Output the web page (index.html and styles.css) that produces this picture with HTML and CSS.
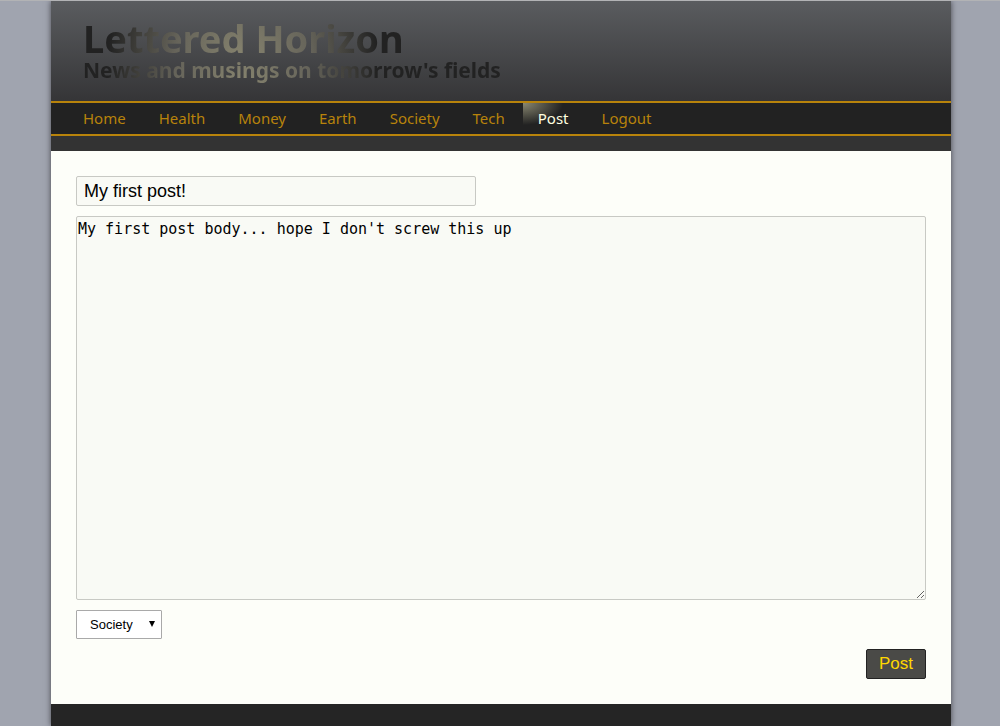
FILE: index.html
```html
<!DOCTYPE html>
<html lang="en">
<head>
<meta charset="utf-8">
<title>Lettered Horizon</title>
<link rel="stylesheet" href="styles.css">
</head>
<body>
<div class="page">
  <header class="masthead">
    <div class="banner">
      <h1 class="title">Lettered Horizon</h1>
      <p class="tagline">News and musings on tomorrow's fields</p>
    </div>
    <nav class="nav">
      <a href="#home">Home</a>
      <a href="#health">Health</a>
      <a href="#money">Money</a>
      <a href="#earth">Earth</a>
      <a href="#society">Society</a>
      <a href="#tech">Tech</a>
      <a class="current" href="#post" aria-current="page">Post</a>
      <a href="#logout">Logout</a>
    </nav>
  </header>
  <main>
    <form class="editor">
      <input class="post-title" type="text" aria-label="Post title" value="My first post!">
      <textarea class="post-body" aria-label="Post body" spellcheck="false">My first post body... hope I don't screw this up</textarea>
      <select class="category" aria-label="Category">
        <option>Home</option>
        <option>Health</option>
        <option>Money</option>
        <option>Earth</option>
        <option selected>Society</option>
        <option>Tech</option>
      </select>
      <button class="submit" type="button">Post</button>
    </form>
  </main>
  <footer class="footer"></footer>
</div>
</body>
</html>
```
FILE: styles.css
```css
* {
  box-sizing: border-box;
}

html,
body {
  height: 100%;
}

body {
  margin: 0;
  padding-left: 2px;
  border-top: 1px solid #b2b3b5;
  background: #a0a4af;
  font-family: "Liberation Sans", Arial, sans-serif;
}

.page {
  display: flex;
  flex-direction: column;
  width: 100%;
  max-width: 900px;
  min-height: 100%;
  margin: 0 auto;
  background: #fdfef9;
  box-shadow: 0 0 6px #44454d;
}

.masthead {
  padding-bottom: 15px;
  background: #333;
  font-family: "Noto Sans", sans-serif;
}

.banner {
  display: flex;
  flex-direction: column;
  align-items: flex-start;
  height: 100px;
  padding: 16px 32px 0;
  background: linear-gradient(#5a5c5f, #353537);
}

.title,
.tagline {
  margin: 0;
  background: radial-gradient(circle 135px at 160px 100%, #87846f, #66645a 50%, #222);
  background-clip: text;
  -webkit-background-clip: text;
  color: transparent;
  font-weight: 700;
}

.title {
  font-size: 38px;
  line-height: 42px;
}

.tagline {
  padding-bottom: 4px;
  font-size: 21px;
  line-height: 22px;
}

.nav {
  display: flex;
  gap: 3px;
  padding: 0 17px;
  border: solid #b8830b;
  border-width: 2px 0;
  background: #222;
}

.nav a {
  padding: 0 15px;
  color: #b8830b;
  font-size: 15px;
  line-height: 31px;
  text-decoration: none;
}

.nav .current {
  background: radial-gradient(ellipse 40px 22px at 0 0, #8a8872, #222);
  color: #ffffe0;
}

.editor {
  display: flex;
  flex-direction: column;
  align-items: flex-start;
  gap: 10px;
  padding: 25px;
}

.post-title,
.post-body {
  border: 1px solid #c8c9c4;
  border-radius: 2px;
  background: #f9faf5;
  color: #000;
}

.post-title {
  width: 400px;
  max-width: 100%;
  height: 30px;
  padding: 0 7px;
  font: 18px "Liberation Sans", Arial, sans-serif;
}

.post-body {
  width: 100%;
  height: 384px;
  padding: 2px 1px;
  font: 15px/20px "DejaVu Sans Mono", monospace;
}

.category {
  appearance: none;
  height: 29px;
  padding: 0 28px 0 13px;
  border: 1px solid #a9a9a9;
  border-radius: 1px;
  background: #fff url("data:image/svg+xml,%3Csvg xmlns='http://www.w3.org/2000/svg' width='6' height='6'%3E%3Cpath d='M0 0h6L3 6z'/%3E%3C/svg%3E") no-repeat right 6px top 10px;
  color: #000;
  font: 13px "Liberation Sans", Arial, sans-serif;
}

.submit {
  align-self: flex-end;
  height: 30px;
  padding: 0 12px;
  border: 1px solid #222;
  border-radius: 2px;
  background: #4a4a47;
  color: #ffd700;
  font: 17px "Liberation Sans", Arial, sans-serif;
}

.footer {
  flex: 1;
  min-height: 22px;
  background: #252525;
}
```
